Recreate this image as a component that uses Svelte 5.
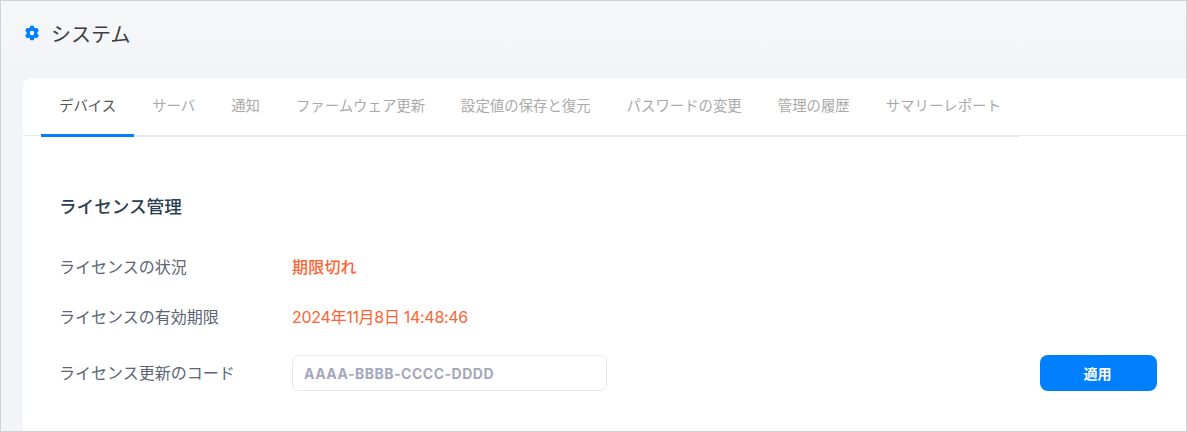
<script>
  const tabs = ['デバイス', 'サーバ', '通知', 'ファームウェア更新', '設定値の保存と復元', 'パスワードの変更', '管理の履歴', 'サマリーレポート'];
  let active = $state(0);
  let code = $state('');
</script>

<div class="page">
  <header class="head">
    <svg class="gear" viewBox="0 0 16 16" width="16" height="16" aria-hidden="true">
      <path fill="#007fff" fill-rule="evenodd" d="M6.200 .8h3.600l.4 1.900 1 .6 1.900-.6 1.800 3.100-1.500 1.300v1.800l1.500 1.300-1.800 3.100-1.900-.6-1 .6-.4 1.900H6.200l-.4-1.900-1-.6-1.900.6-1.800-3.100 1.500-1.300V7.100L1.100 5.800l1.800-3.100 1.900.6 1-.6zM8 5.800a2.200 2.200 0 1 0 0 4.400 2.200 2.200 0 0 0 0-4.400z"/>
    </svg>
    <h1>システム</h1>
  </header>

  <section class="card">
    <nav class="tabs">
      <div class="tablist">
        {#each tabs as tab, i}
          <button class="tab" class:active={active === i} onclick={() => (active = i)}>{tab}</button>
        {/each}
      </div>
    </nav>

    <div class="body">
      <h2>ライセンス管理</h2>

      <div class="row">
        <span class="label">ライセンスの状況</span>
        <span class="value strong">期限切れ</span>
      </div>
      <div class="row">
        <span class="label">ライセンスの有効期限</span>
        <span class="value">2024年11月8日 14:48:46</span>
      </div>
      <div class="row form">
        <span class="label">ライセンス更新のコード</span>
        <input type="text" placeholder="AAAA-BBBB-CCCC-DDDD" bind:value={code} />
        <button class="apply">適用</button>
      </div>
    </div>
  </section>
</div>

<style>
  :global(body) {
    margin: 0;
    font-family: Inter, "Noto Sans CJK JP", sans-serif;
  }

  .page {
    box-sizing: border-box;
    height: 432px;
    overflow: hidden;
    padding-left: 22px;
    background: linear-gradient(#f6f7f9, #f3f4f7 78px);
    border: 1px solid #d2d2d2;
  }

  .head {
    display: flex;
    align-items: center;
    gap: 11px;
    height: 64px;
    padding-left: 1px;
  }

  .gear {
    flex-shrink: 0;
  }

  h1 {
    margin: 0;
    font-size: 20px;
    font-weight: 400;
    color: #3a3d42;
  }

  .card {
    margin-top: 13px;
    height: 360px;
    background: #fff;
    border-radius: 8px 0 0 0;
  }

  .tabs {
    height: 58px;
    box-sizing: border-box;
    padding-left: 18px;
    border-bottom: 1px solid #e6e8ee;
  }

  .tablist {
    display: flex;
    box-sizing: border-box;
    width: 978px;
    height: 59px;
    border-bottom: 2px solid #e6eaf0;
  }

  .tab {
    flex-shrink: 0;
    height: 59px;
    padding: 0 18px 3px;
    border: 0;
    border-bottom: 3px solid transparent;
    background: none;
    font: inherit;
    font-size: 14.4px;
    white-space: nowrap;
    color: #aaa;
    cursor: pointer;
  }

  .tab.active {
    color: #555;
    border-bottom-color: #007fff;
  }

  .body {
    padding: 59px 29px 0 36px;
  }

  h2 {
    margin: 0 0 22px;
    height: 24px;
    line-height: 24px;
    font-size: 17.6px;
    font-weight: 500;
    color: #2c3e50;
  }

  .row {
    display: flex;
    align-items: center;
    height: 50px;
    font-size: 16px;
  }

  .label {
    width: 233px;
    flex-shrink: 0;
    white-space: nowrap;
    color: #5c6573;
  }

  .value {
    letter-spacing: -0.3px;
    color: #ff6333;
  }

  .value.strong {
    font-weight: 500;
    letter-spacing: 0.2px;
  }

  .form {
    height: 36px;
    margin-top: 14px;
  }

  .form .label {
    margin-bottom: 3px;
  }

  input {
    box-sizing: border-box;
    width: 315px;
    height: 36px;
    padding: 0 11px;
    border: 1px solid #e4e8f0;
    border-radius: 6px;
    outline: none;
    font: inherit;
    font-size: 14px;
    font-weight: 700;
    letter-spacing: 0.5px;
    color: #555;
  }

  input::placeholder {
    color: #a5a8bd;
    opacity: 1;
  }

  .apply {
    width: 117px;
    height: 36px;
    margin-left: auto;
    padding: 0 2px 0 0;
    border: 0;
    border-radius: 8px;
    background: #007fff;
    color: #fff;
    font: inherit;
    font-size: 14px;
    font-weight: 700;
    cursor: pointer;
  }
</style>
